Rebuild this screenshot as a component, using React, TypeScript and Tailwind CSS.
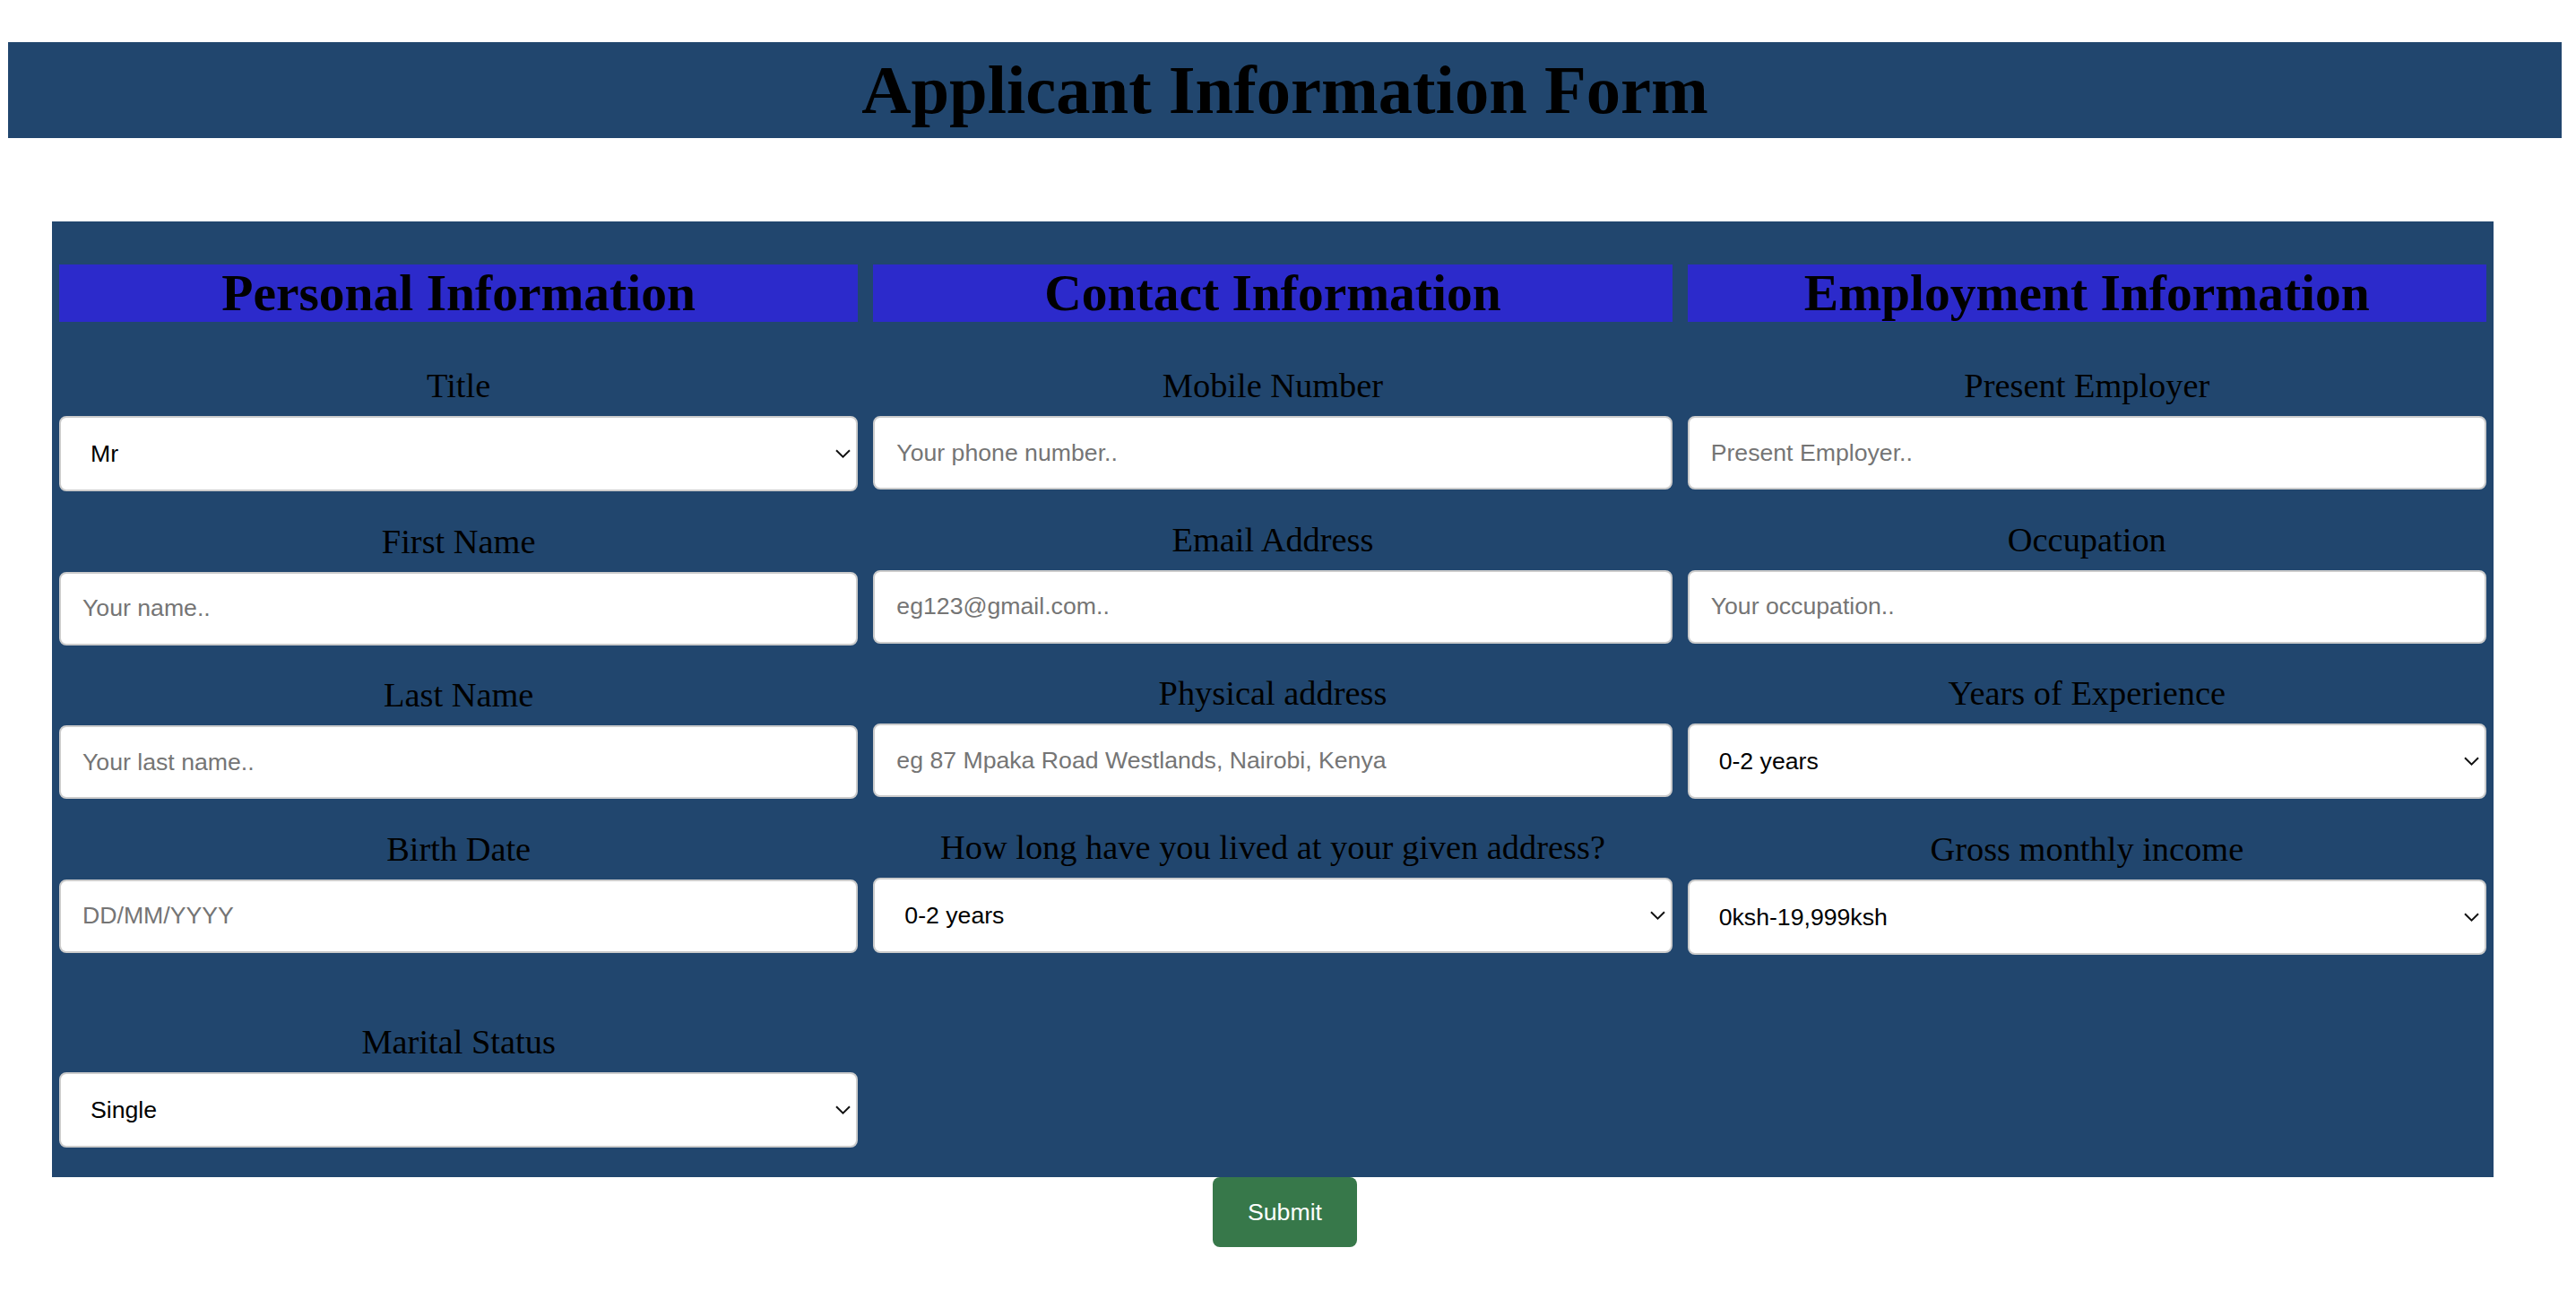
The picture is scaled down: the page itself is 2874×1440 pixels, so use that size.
import React from "react";

const NAVY = "bg-[#21466e]";

function Chevron() {
  return (
    <svg
      className="pointer-events-none absolute right-[8px] top-1/2 -translate-y-1/2"
      width="17"
      height="10"
      viewBox="0 0 17 10"
      fill="none"
    >
      <path d="M1 1.2 L8.5 8.6 L16 1.2" stroke="#111" strokeWidth="2" />
    </svg>
  );
}

function Label({ text, first }: { text: string; first?: boolean }) {
  return (
    <label
      className={`${first ? "mt-[49px]" : "mt-[33.5px]"} block text-center text-[38.4px] leading-[44px] text-black font-['Liberation_Serif',serif]`}
    >
      {text}
    </label>
  );
}

function TextField({ label, placeholder, first }: { label: string; placeholder: string; first?: boolean }) {
  return (
    <>
      <Label text={label} first={first} />
      <input
        type="text"
        placeholder={placeholder}
        className="mt-[12px] h-[82px] w-full rounded-[8px] border-2 border-[#cccccc] bg-white pl-[24px] text-[26.67px] text-black outline-none placeholder:text-[#757575] font-['Liberation_Sans',Arial,sans-serif]"
      />
    </>
  );
}

function SelectField({
  label,
  options,
  first,
}: {
  label: string;
  options: string[];
  first?: boolean;
}) {
  return (
    <>
      <Label text={label} first={first} />
      <div className="relative mt-[12px]">
        <select className="h-[84px] w-full appearance-none rounded-[8px] border-2 border-[#cccccc] bg-white pl-[33px] text-[26.67px] text-black outline-none font-['Liberation_Sans',Arial,sans-serif]">
          {options.map((o) => (
            <option key={o}>{o}</option>
          ))}
        </select>
        <Chevron />
      </div>
    </>
  );
}

function Heading({ text }: { text: string }) {
  return (
    <h2 className="h-[64px] bg-[#2c2acb] text-center text-[57.5px] font-bold leading-[64px] text-black font-['Liberation_Serif',serif]">
      {text}
    </h2>
  );
}

export default function App() {
  const years = ["0-2 years", "3-5 years", "6-10 years", "Over 10 years"];
  return (
    <div className="min-h-screen bg-white pl-[9px] pr-[16px] pt-[47px]">
      <h1
        className={`flex h-[107px] items-center justify-center ${NAVY} text-[76.6px] font-bold leading-[88px] text-black font-['Liberation_Serif',serif]`}
      >
        Applicant Information Form
      </h1>

      <form
        className={`ml-[49px] mt-[93px] grid w-[2724px] grid-cols-3 gap-x-[17px] ${NAVY} px-[8px] pb-[33px] pt-[48px]`}
        onSubmit={(e) => e.preventDefault()}
      >
        {/* Personal */}
        <div className="flex flex-col">
          <Heading text="Personal Information" />
          <SelectField label="Title" options={["Mr", "Mrs", "Ms", "Dr"]} first />
          <TextField label="First Name" placeholder="Your name.." />
          <TextField label="Last Name" placeholder="Your last name.." />
          <TextField label="Birth Date" placeholder="DD/MM/YYYY" />
          <div className="h-[44px]" />
          <SelectField label="Marital Status" options={["Single", "Married", "Divorced", "Widowed"]} />
        </div>

        {/* Contact */}
        <div className="flex flex-col">
          <Heading text="Contact Information" />
          <TextField label="Mobile Number" placeholder="Your phone number.." first />
          <TextField label="Email Address" placeholder="eg123@gmail.com.." />
          <TextField label="Physical address" placeholder="eg 87 Mpaka Road Westlands, Nairobi, Kenya" />
          <SelectField label="How long have you lived at your given address?" options={years} />
        </div>

        {/* Employment */}
        <div className="flex flex-col">
          <Heading text="Employment Information" />
          <TextField label="Present Employer" placeholder="Present Employer.." first />
          <TextField label="Occupation" placeholder="Your occupation.." />
          <SelectField label="Years of Experience" options={years} />
          <SelectField
            label="Gross monthly income"
            options={["0ksh-19,999ksh", "20,000ksh-49,999ksh", "50,000ksh-99,999ksh", "100,000ksh+"]}
          />
        </div>
      </form>

      <div className="flex justify-center">
        <button
          type="submit"
          className="h-[78px] w-[161px] rounded-[8px] bg-[#37784a] text-[26.67px] text-white font-['Liberation_Sans',Arial,sans-serif]"
        >
          Submit
        </button>
      </div>
    </div>
  );
}
